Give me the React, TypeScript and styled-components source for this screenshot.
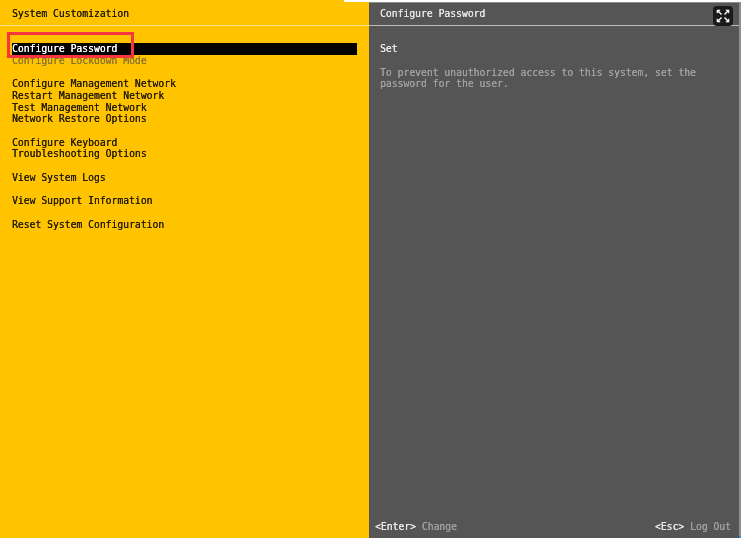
import { createGlobalStyle } from 'styled-components';
import styled from 'styled-components';

const LINE = 11.72;

const GlobalStyle = createGlobalStyle`
  html, body {
    margin: 0;
    padding: 0;
    background: #ffffff;
  }
  body {
    font-family: "DejaVu Sans Mono", "Liberation Mono", monospace;
    font-size: 9.72px;
  }
`;

const Screen = styled.div`
  width: 741px;
  height: 538px;
  display: grid;
  grid-template-columns: 369px 1fr;
  overflow: hidden;
  position: relative;
`;

const Panel = styled.section<{ $dark?: boolean }>`
  display: flex;
  flex-direction: column;
  min-height: 0;
  background: ${({ $dark }) => ($dark ? '#555555' : '#ffc300')};
  color: ${({ $dark }) => ($dark ? '#e6e6e6' : '#241c00')};
  margin-top: ${({ $dark }) => ($dark ? '2px' : '0')};
  border-top: ${({ $dark }) => ($dark ? '1px solid #8c8c8c' : '0')};
  border-right: ${({ $dark }) => ($dark ? '2px solid #8f8f8f' : '0')};
`;

const PanelHeader = styled.header<{ $dark?: boolean }>`
  height: ${({ $dark }) => ($dark ? '23px' : '26px')};
  flex: none;
  box-sizing: border-box;
  padding: ${({ $dark }) => ($dark ? '5px 0 0 11px' : '8px 0 0 12px')};
  line-height: 12px;
  border-bottom: 1px solid ${({ $dark }) => ($dark ? '#bdbdbd' : '#ffe48a')};
  filter: blur(0.35px);
  text-shadow: 0.15px 0 currentColor;
`;

const MenuList = styled.div`
  padding: 17px 12px 0 12px;
  filter: blur(0.35px);
  text-shadow: 0.15px 0 currentColor;
`;

const MenuRow = styled.div<{ $selected?: boolean; $disabled?: boolean; $gap?: boolean }>`
  height: ${LINE}px;
  line-height: ${LINE}px;
  white-space: pre;
  margin-top: ${({ $gap }) => ($gap ? `${LINE}px` : '0')};
  background: ${({ $selected }) => ($selected ? '#000000' : 'transparent')};
  color: ${({ $selected, $disabled }) =>
    $selected ? '#ffffff' : $disabled ? '#8a7630' : '#241c00'};
`;

const DetailBody = styled.div`
  flex: 1;
  display: flex;
  flex-direction: column;
  padding: 16.5px 12px 0 11px;
  filter: blur(0.35px);
  text-shadow: 0.15px 0 currentColor;
`;

const DetailTitle = styled.div`
  line-height: ${LINE}px;
  color: #e8e8e8;
`;

const DetailText = styled.p`
  margin: 12.4px 0 0;
  line-height: ${LINE}px;
  color: #a0a0a0;
  white-space: pre;
`;

const Footer = styled.footer`
  margin-top: auto;
  height: 17px;
  display: flex;
  justify-content: space-between;
  padding: 0 8px 0 6px;
  line-height: 12px;
  filter: blur(0.35px);
  text-shadow: 0.15px 0 currentColor;
`;

const Hint = styled.span`
  color: #a0a0a0;
  white-space: pre;
`;

const Key = styled.span`
  color: #e8e8e8;
`;

const ExpandButton = styled.button`
  position: absolute;
  top: 6px;
  left: 713px;
  width: 20px;
  height: 20px;
  padding: 0;
  border: 0;
  border-radius: 4px;
  background: #1a1a1a;
  display: flex;
  align-items: center;
  justify-content: center;
`;

const TopNotch = styled.div`
  position: absolute;
  left: 344px;
  top: 0;
  width: 50px;
  height: 2px;
  background: #ffffff;
`;

const CornerMark = styled.div`
  position: absolute;
  right: 0;
  bottom: 0;
  width: 2px;
  height: 2px;
  background: #2f8fe8;
`;

const Annotation = styled.div`
  position: absolute;
  left: 7px;
  top: 32px;
  width: 127px;
  height: 26px;
  box-sizing: border-box;
  border: 3px solid #f5363f;
`;

const menu = [
  { label: 'Configure Password', selected: true },
  { label: 'Configure Lockdown Mode', disabled: true },
  { label: 'Configure Management Network', gap: true },
  { label: 'Restart Management Network' },
  { label: 'Test Management Network' },
  { label: 'Network Restore Options' },
  { label: 'Configure Keyboard', gap: true },
  { label: 'Troubleshooting Options' },
  { label: 'View System Logs', gap: true },
  { label: 'View Support Information', gap: true },
  { label: 'Reset System Configuration', gap: true },
];

const App = () => (
  <>
    <GlobalStyle />
    <Screen>
      <Panel>
        <PanelHeader>System Customization</PanelHeader>
        <MenuList>
          {menu.map((item) => (
            <MenuRow
              key={item.label}
              $selected={item.selected}
              $disabled={item.disabled}
              $gap={item.gap}
            >
              {item.label}
            </MenuRow>
          ))}
        </MenuList>
      </Panel>
      <Panel $dark>
        <PanelHeader $dark>Configure Password</PanelHeader>
        <DetailBody>
          <DetailTitle>Set</DetailTitle>
          <DetailText>
            {'To prevent unauthorized access to this system, set the\npassword for the user.'}
          </DetailText>
        </DetailBody>
        <Footer>
          <Hint>
            <Key>&lt;Enter&gt;</Key> Change
          </Hint>
          <Hint>
            <Key>&lt;Esc&gt;</Key> Log Out
          </Hint>
        </Footer>
      </Panel>
      <TopNotch />
      <ExpandButton aria-label="Full screen">
        <svg width="14" height="14" viewBox="0 0 14 14" fill="#ffffff" stroke="#ffffff" strokeWidth="1.4">
          <path d="M1 1h3.2L1 4.2zM13 1H9.8L13 4.2zM1 13h3.2L1 9.8zM13 13H9.8L13 9.8z" strokeWidth="0.6" />
          <path d="M2.5 2.5L5.5 5.5M11.5 2.5L8.5 5.5M2.5 11.5L5.5 8.5M11.5 11.5L8.5 8.5" />
        </svg>
      </ExpandButton>
      <Annotation />
      <CornerMark />
    </Screen>
  </>
);

export default App;
